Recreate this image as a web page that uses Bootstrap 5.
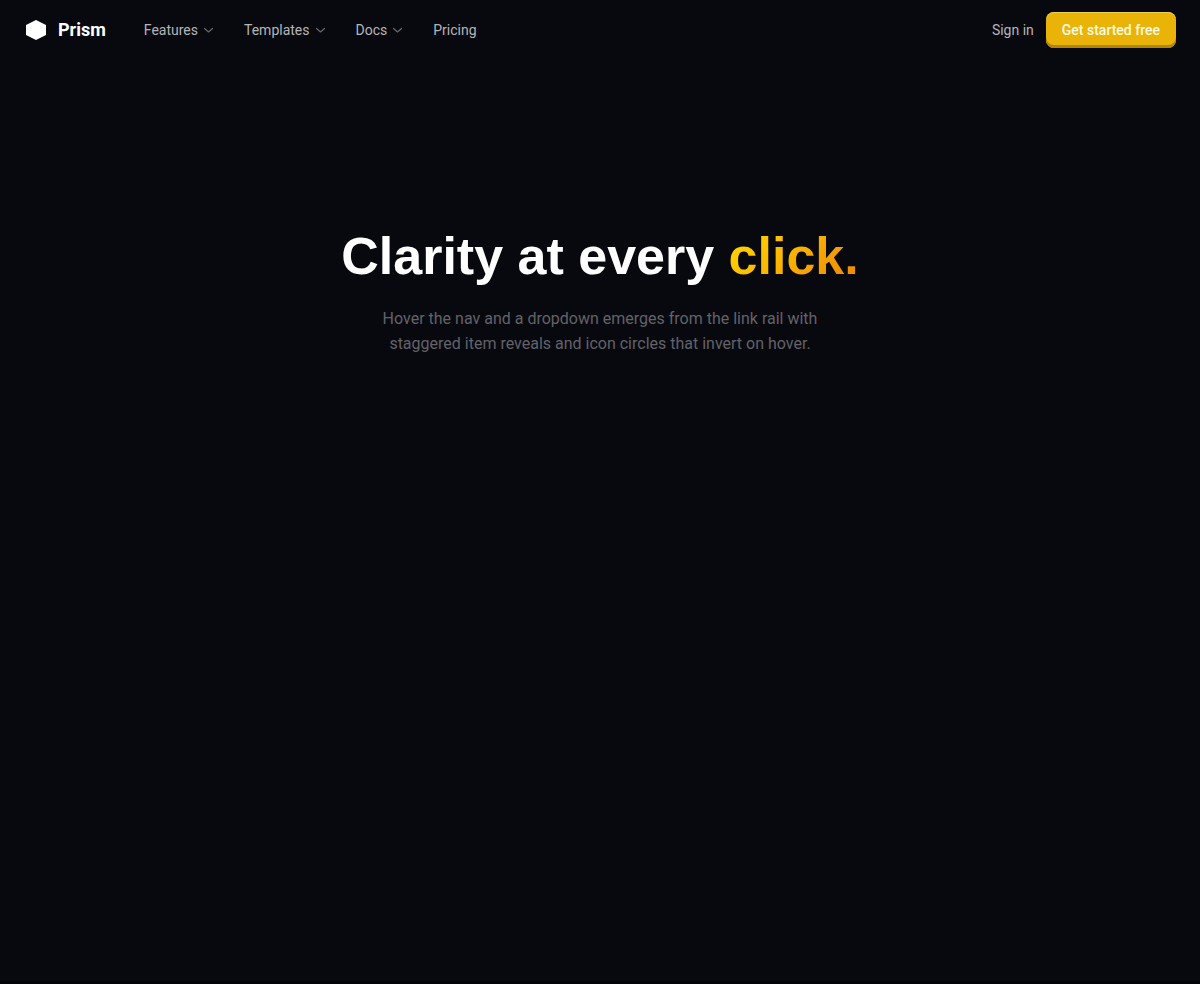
<!DOCTYPE html>
<html lang="en" data-bs-theme="dark">
<head>
<meta charset="utf-8">
<meta name="viewport" content="width=device-width, initial-scale=1">
<title>Prism</title>
<link href="https://cdn.jsdelivr.net/npm/bootstrap@5.3.0/dist/css/bootstrap.min.css" rel="stylesheet">
<style>
  body { font-family: Roboto, "Liberation Sans", sans-serif; background: #030106; }
  .page { min-height: calc(100vh - 3px); background: #08090f; }
  .topbar { height: 60px; }
  .brand-link { font-size: 18px; line-height: 24px; font-weight: 700; color: #fff; }
  .site-link { font-size: 14px; line-height: 20px; color: #b5b5b8; }
  .site-link:hover { color: #fff; }
  .site-link svg { color: #66666d; }
  .nav-links { gap: 30px; margin-left: 38px; }
  .btn-start {
    height: 36px; font-size: 14px; line-height: 20px; font-weight: 500;
    color: #fffbe0; background: #eab308; border: 0; border-radius: 8px;
    box-shadow: inset 0 1px 0 #f5cc4c, inset 0 -3px 0 #b08508;
  }
  .btn-start:hover { color: #fff; background: #f2bd18; }
  .hero { padding: 164px 24px 64px; }
  .hero-title { font-family: "Liberation Sans", Arial, sans-serif; font-size: 52px; line-height: 64px; font-weight: 700; color: #fff; margin-bottom: 18px; }
  .hero-accent {
    background: linear-gradient(135deg, #facc15, #ffcc00 20%, #f08c00 90%);
    -webkit-background-clip: text; background-clip: text; color: transparent;
  }
  .hero-copy { max-width: 470px; font-size: 16px; line-height: 25px; color: #626268; }
</style>
</head>
<body>
<div class="page">
  <header class="topbar d-flex align-items-center px-4">
    <a class="brand-link d-flex align-items-center text-decoration-none" href="#">
      <svg class="me-2 pe-none" width="26" height="24" viewBox="0 0 26 24" aria-hidden="true"><path d="M12 2l10 5v10l-10 5-10-5V7z" fill="#fff"/></svg>
      Prism
    </a>
    <nav class="nav-links d-none d-md-flex align-items-center" aria-label="Main">
      <a class="site-link d-flex align-items-center gap-1 text-decoration-none" href="#">Features
        <svg width="12" height="12" viewBox="0 0 12 12" fill="none" stroke="currentColor" stroke-width="1.2" stroke-linecap="round" stroke-linejoin="round" aria-hidden="true"><path d="M2.5 4.5L6.5 8l4-3.5"/></svg></a>
      <a class="site-link d-flex align-items-center gap-1 text-decoration-none" href="#">Templates
        <svg width="12" height="12" viewBox="0 0 12 12" fill="none" stroke="currentColor" stroke-width="1.2" stroke-linecap="round" stroke-linejoin="round" aria-hidden="true"><path d="M2.5 4.5L6.5 8l4-3.5"/></svg></a>
      <a class="site-link d-flex align-items-center gap-1 text-decoration-none" href="#">Docs
        <svg width="12" height="12" viewBox="0 0 12 12" fill="none" stroke="currentColor" stroke-width="1.2" stroke-linecap="round" stroke-linejoin="round" aria-hidden="true"><path d="M2.5 4.5L6.5 8l4-3.5"/></svg></a>
      <a class="site-link text-decoration-none" href="#">Pricing</a>
    </nav>
    <div class="d-flex align-items-center ms-auto">
      <a class="site-link text-decoration-none me-2 pe-1" href="#">Sign in</a>
      <button type="button" class="btn btn-start px-3 py-0">Get started free</button>
    </div>
  </header>
  <main class="hero text-center">
    <h1 class="hero-title">Clarity at every <span class="hero-accent">click.</span></h1>
    <p class="hero-copy mx-auto mb-0">Hover the nav and a dropdown emerges from the link rail with staggered item reveals and icon circles that invert on hover.</p>
  </main>
</div>
<script src="https://cdn.jsdelivr.net/npm/bootstrap@5.3.0/dist/js/bootstrap.bundle.min.js"></script>
</body>
</html>
